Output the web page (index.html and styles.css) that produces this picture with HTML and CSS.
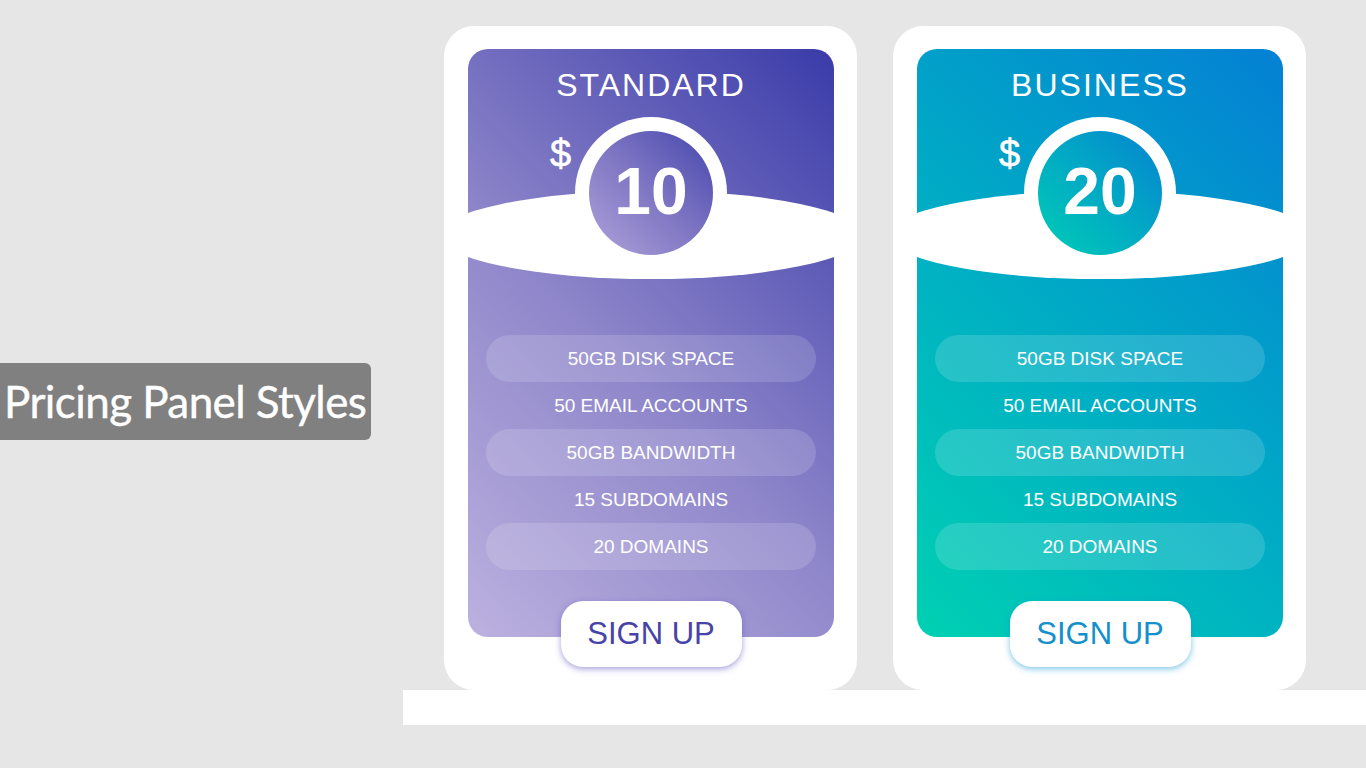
FILE: index.html
```html
<!DOCTYPE html>
<html lang="en">
<head>
<meta charset="utf-8">
<title>Pricing Panel Styles</title>
<link rel="stylesheet" href="styles.css">
</head>
<body>
<div class="page">
  <aside class="side">
    <div class="label">Pricing Panel Styles</div>
  </aside>
  <main class="main">
    <div class="cards">
      <section class="card card-standard">
        <div class="panel">
          <div class="header">
            <h2 class="title">STANDARD</h2>
            <div class="band"></div>
            <span class="currency">$</span>
            <div class="ring"><div class="price">10</div></div>
          </div>
          <ul class="features">
            <li class="pill">50GB DISK SPACE</li>
            <li>50 EMAIL ACCOUNTS</li>
            <li class="pill">50GB BANDWIDTH</li>
            <li>15 SUBDOMAINS</li>
            <li class="pill">20 DOMAINS</li>
          </ul>
        </div>
        <a class="signup" href="#">SIGN UP</a>
      </section>
      <section class="card card-business">
        <div class="panel">
          <div class="header">
            <h2 class="title">BUSINESS</h2>
            <div class="band"></div>
            <span class="currency">$</span>
            <div class="ring"><div class="price">20</div></div>
          </div>
          <ul class="features">
            <li class="pill">50GB DISK SPACE</li>
            <li>50 EMAIL ACCOUNTS</li>
            <li class="pill">50GB BANDWIDTH</li>
            <li>15 SUBDOMAINS</li>
            <li class="pill">20 DOMAINS</li>
          </ul>
        </div>
        <a class="signup" href="#">SIGN UP</a>
      </section>
    </div>
    <div class="strip"></div>
  </main>
</div>
</body>
</html>
```

FILE: styles.css
```css
* { box-sizing: border-box; }
html, body { margin: 0; padding: 0; }
body {
  background: #e6e6e6;
  font-family: "Liberation Sans", Arial, sans-serif;
  width: 1366px;
  height: 768px;
  overflow: hidden;
}
.page {
  display: flex;
  align-items: flex-start;
}
.side {
  width: 403px;
  flex: none;
  padding-top: 363px;
}
.label {
  width: 371px;
  height: 77px;
  background: #808080;
  border-radius: 0 6px 6px 0;
  color: #fff;
  font-family: "Lato", "Open Sans", sans-serif;
  font-size: 44px;
  line-height: 77px;
  padding-left: 4px;
  white-space: nowrap;
  letter-spacing: -0.58px;
  -webkit-text-stroke: 0.4px #fff;
}
.main {
  flex: 1;
  padding-top: 26px;
  display: flex;
  flex-direction: column;
}
.cards {
  display: flex;
  gap: 36px;
  padding-left: 41px;
}
.card {
  width: 413px;
  background: #fff;
  border-radius: 30px;
  padding: 23px 23px 23px 24px;
  display: flex;
  flex-direction: column;
  align-items: center;
}
.panel {
  width: 366px;
  height: 588px;
  border-radius: 20px;
  position: relative;
  overflow: hidden;
  color: #fff;
}
.card-standard .panel { background: linear-gradient(45deg, #bcb1df 0%, #8e86ca 45%, #3a3ba9 100%); }
.card-business .panel { background: linear-gradient(45deg, #00d1b2 0%, #00aec4 45%, #0480d4 100%); }
.header {
  position: relative;
  height: 230px;
  display: flex;
  flex-direction: column;
  align-items: center;
}
.title {
  margin: 0;
  padding-top: 16px;
  font-size: 32px;
  line-height: 40px;
  font-weight: normal;
  letter-spacing: 2px;
}
.band {
  position: absolute;
  left: 50%;
  top: 142px;
  width: 422px;
  height: 88px;
  margin-left: -211px;
  border-radius: 50%;
  background: #fff;
}
.currency {
  position: absolute;
  left: 82px;
  top: 86px;
  font-size: 38px;
  line-height: 38px;
  -webkit-text-stroke: 0.6px #fff;
}
.ring {
  position: relative;
  z-index: 1;
  margin-top: 12px;
  width: 152px;
  height: 152px;
  border-radius: 50%;
  background: #fff;
  padding: 14px;
}
.price {
  width: 124px;
  height: 124px;
  border-radius: 50%;
  display: flex;
  align-items: center;
  justify-content: center;
  font-size: 66px;
  font-weight: bold;
  padding-bottom: 4px;
}
.card-standard .price { background: linear-gradient(45deg, #afa2da 0%, #7f76c3 50%, #4546ad 100%); }
.card-business .price { background: linear-gradient(45deg, #00cdb6 0%, #01aac4 50%, #0683d1 100%); }
.features {
  list-style: none;
  margin: 56px 0 0;
  padding: 0 18px;
}
.features li {
  height: 47px;
  line-height: 47px;
  text-align: center;
  font-size: 19px;
  border-radius: 24px;
}
.features li.pill { background: rgba(255, 255, 255, 0.15); }
.signup {
  margin-top: -36px;
  position: relative;
  z-index: 1;
  width: 181px;
  height: 66px;
  border-radius: 22px;
  background: #fff;
  font-size: 31px;
  line-height: 66px;
  text-align: center;
  text-decoration: none;
}
.card-standard .signup { color: #4743a8; box-shadow: 0 2px 6px rgba(90, 80, 190, 0.55); }
.card-business .signup { color: #1590cd; box-shadow: 0 2px 6px rgba(20, 150, 210, 0.55); }
.strip {
  height: 35px;
  background: #fff;
}
```
